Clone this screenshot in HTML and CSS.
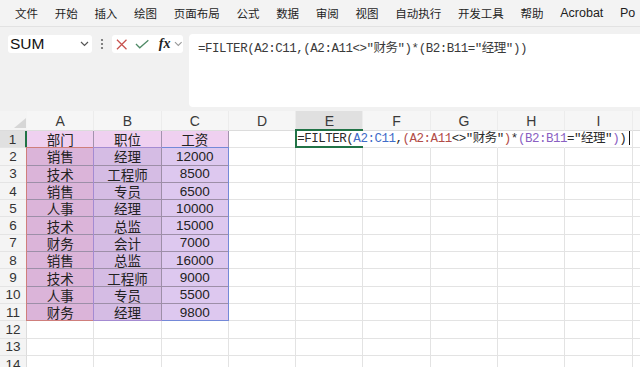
FILE: index.html
```html
<!DOCTYPE html>
<html lang="zh-CN">
<head>
<meta charset="utf-8">
<title>Excel FILTER</title>
<link rel="stylesheet" href="styles.css">
</head>
<body>
<div class="menubar">
  <span>文件</span><span>开始</span><span>插入</span><span>绘图</span><span>页面布局</span><span>公式</span><span>数据</span><span>审阅</span><span>视图</span><span>自动执行</span><span>开发工具</span><span>帮助</span><span>Acrobat</span><span>Po</span>
</div>
<div class="fbar">
  <div class="namebox"><span>SUM</span>
    <svg class="chev" width="9" height="6" viewBox="0 0 9 6"><path d="M1 1 L4.5 4.5 L8 1" fill="none" stroke="#555" stroke-width="1.2"/></svg>
  </div>
  <div class="dots"><svg width="4" height="12" viewBox="0 0 4 12"><circle cx="2" cy="2" r="1.1" fill="#666"/><circle cx="2" cy="6" r="1.1" fill="#666"/><circle cx="2" cy="10" r="1.1" fill="#666"/></svg></div>
  <div class="btns">
    <svg width="12" height="11" viewBox="0 0 12 11"><path d="M1 0.5 L11 10.5 M11 0.5 L1 10.5" stroke="#c8524e" stroke-width="1.3" fill="none"/></svg>
    <svg width="15" height="10" viewBox="0 0 15 10"><path d="M1 5 L5 9 L14 1" stroke="#4f8a66" stroke-width="1.3" fill="none"/></svg>
    <span class="fx">fx</span>
    <svg width="9" height="6" viewBox="0 0 9 6"><path d="M1 1 L4.5 4.5 L8 1" fill="none" stroke="#999" stroke-width="1.1"/></svg>
  </div>
  <div class="formula">=FILTER(A2:C11,(A2:A11&lt;&gt;"财务")*(B2:B11="经理"))</div>
</div>
<div class="sheet">
  <div class="corner"><svg width="12" height="10" viewBox="0 0 12 10"><polygon points="12,0 12,10 0,10" fill="#d6d6d6"/></svg></div>
  <div class="ch">A</div><div class="ch">B</div><div class="ch">C</div><div class="ch">D</div><div class="ch act">E</div><div class="ch">F</div><div class="ch">G</div><div class="ch">H</div><div class="ch">I</div><div class="ch">J</div>

  <div class="rh act">1</div>
  <div class="c th">部门</div><div class="c th">职位</div><div class="c th">工资</div><div class="c"></div>
  <div class="c nb edit"><span class="ftext">=FILTER(<span class="rb">A2:C11</span>,<span class="rr">(A2:A11</span>&lt;&gt;"财务"<span class="rr">)</span>*<span class="rp">(B2:B11</span>="经理"<span class="rp">)</span>)<span class="caret"></span></span></div>
  <div class="c nb"></div><div class="c nb"></div><div class="c nb"></div><div class="c"></div><div class="c"></div>

  <div class="rh">2</div><div class="c da">销售</div><div class="c db">经理</div><div class="c dc">12000</div><div class="c"></div><div class="c"></div><div class="c"></div><div class="c"></div><div class="c"></div><div class="c"></div><div class="c"></div>
  <div class="rh">3</div><div class="c da">技术</div><div class="c db">工程师</div><div class="c dc">8500</div><div class="c"></div><div class="c"></div><div class="c"></div><div class="c"></div><div class="c"></div><div class="c"></div><div class="c"></div>
  <div class="rh">4</div><div class="c da">销售</div><div class="c db">专员</div><div class="c dc">6500</div><div class="c"></div><div class="c"></div><div class="c"></div><div class="c"></div><div class="c"></div><div class="c"></div><div class="c"></div>
  <div class="rh">5</div><div class="c da">人事</div><div class="c db">经理</div><div class="c dc">10000</div><div class="c"></div><div class="c"></div><div class="c"></div><div class="c"></div><div class="c"></div><div class="c"></div><div class="c"></div>
  <div class="rh">6</div><div class="c da">技术</div><div class="c db">总监</div><div class="c dc">15000</div><div class="c"></div><div class="c"></div><div class="c"></div><div class="c"></div><div class="c"></div><div class="c"></div><div class="c"></div>
  <div class="rh">7</div><div class="c da">财务</div><div class="c db">会计</div><div class="c dc">7000</div><div class="c"></div><div class="c"></div><div class="c"></div><div class="c"></div><div class="c"></div><div class="c"></div><div class="c"></div>
  <div class="rh">8</div><div class="c da">销售</div><div class="c db">总监</div><div class="c dc">16000</div><div class="c"></div><div class="c"></div><div class="c"></div><div class="c"></div><div class="c"></div><div class="c"></div><div class="c"></div>
  <div class="rh">9</div><div class="c da">技术</div><div class="c db">工程师</div><div class="c dc">9000</div><div class="c"></div><div class="c"></div><div class="c"></div><div class="c"></div><div class="c"></div><div class="c"></div><div class="c"></div>
  <div class="rh">10</div><div class="c da">人事</div><div class="c db">专员</div><div class="c dc">5500</div><div class="c"></div><div class="c"></div><div class="c"></div><div class="c"></div><div class="c"></div><div class="c"></div><div class="c"></div>
  <div class="rh">11</div><div class="c da">财务</div><div class="c db">经理</div><div class="c dc">9800</div><div class="c"></div><div class="c"></div><div class="c"></div><div class="c"></div><div class="c"></div><div class="c"></div><div class="c"></div>
  <div class="rh">12</div><div class="c"></div><div class="c"></div><div class="c"></div><div class="c"></div><div class="c"></div><div class="c"></div><div class="c"></div><div class="c"></div><div class="c"></div><div class="c"></div>
  <div class="rh">13</div><div class="c"></div><div class="c"></div><div class="c"></div><div class="c"></div><div class="c"></div><div class="c"></div><div class="c"></div><div class="c"></div><div class="c"></div><div class="c"></div>
  <div class="rh">14</div><div class="c"></div><div class="c"></div><div class="c"></div><div class="c"></div><div class="c"></div><div class="c"></div><div class="c"></div><div class="c"></div><div class="c"></div><div class="c"></div>

  <div class="hl hl-blue"></div>
  <div class="hl hl-red"></div>
  <div class="hl hl-purple"></div>
</div>
</body>
</html>
```

FILE: styles.css
```css
* { box-sizing: border-box; }
html, body { margin: 0; padding: 0; }
body {
  width: 640px;
  height: 367px;
  overflow: hidden;
  background: #f1f1f1;
  font-family: "Liberation Sans", "Noto Sans CJK SC", sans-serif;
  color: #222;
}

.menubar {
  height: 27px;
  display: flex;
  align-items: center;
  gap: 16.7px;
  padding-left: 15px;
  font-size: 11.5px;
  color: #1e1e1e;
  background: #f3f3f3;
  border-bottom: 1px solid #e2e2e2;
  white-space: nowrap;
  overflow: hidden;
}
.menubar span:nth-child(13) { font-size: 12.5px; }
.menubar span:nth-child(14) { font-size: 12.5px; }

.fbar {
  height: 84px;
  display: flex;
  align-items: flex-start;
  padding-top: 7px;
  padding-left: 8px;
}
.namebox {
  width: 84px;
  height: 18px;
  margin-top: 1px;
  background: #fff;
  border-radius: 3px;
  display: flex;
  align-items: center;
  justify-content: space-between;
  padding: 0 3px 0 2px;
  font-size: 15.5px;
  color: #111;
}
.dots {
  width: 20px;
  height: 18px;
  margin-top: 1px;
  display: flex;
  align-items: center;
  justify-content: center;
}
.btns {
  width: 71px;
  height: 18px;
  margin-top: 1px;
  background: #fff;
  border-radius: 3px;
  display: flex;
  align-items: center;
  gap: 8px;
  padding-left: 4px;
}
.btns svg:last-child { margin-left: -4px; }
.fx {
  font-family: "Liberation Serif", "DejaVu Serif", serif;
  font-style: italic;
  font-weight: bold;
  font-size: 14px;
  color: #222;
  margin-left: 1px;
}
.formula {
  flex: 1;
  height: 73px;
  margin-left: 6px;
  background: #fff;
  border-radius: 4px 0 0 4px;
  padding: 3px 0 0 9px;
  font-family: "Liberation Mono", "Noto Sans CJK SC", monospace;
  font-size: 12.5px;
  letter-spacing: -0.48px;
  color: #3a3a3a;
  white-space: nowrap;
}

.sheet {
  position: relative;
  display: grid;
  grid-template-columns: 27px repeat(10, 67.3px);
  grid-template-rows: 20px repeat(14, 17.3px);
  background: #fff;
}
.corner {
  background: #f4f4f4;
  border-bottom: 1px solid #dcdcdc;
  display: flex;
  align-items: flex-end;
  justify-content: flex-end;
  padding: 0 1px 2px 0;
}
.ch {
  background: #f6f6f6;
  border-bottom: 1px solid #dcdcdc;
  border-right: 1px solid #ececec;
  display: flex;
  align-items: center;
  justify-content: center;
  font-size: 14px;
  color: #3a3a3a;
  padding-top: 1px;
}
.ch.act {
  background: #e0e0e0;
  border-bottom: 2px solid #217346;
}
.rh {
  background: #f4f4f4;
  border-bottom: 1px solid #e4e4e4;
  border-right: 1px solid #dcdcdc;
  display: flex;
  align-items: center;
  justify-content: center;
  font-size: 13.5px;
  color: #333;
}
.rh.act {
  background: #e0e0e0;
  border-right: 2px solid #217346;
}
.c {
  border-right: 1px solid #e3e3e3;
  border-bottom: 1px solid #e3e3e3;
  display: flex;
  align-items: center;
  justify-content: center;
  font-size: 13.5px;
  color: #222;
  white-space: nowrap;
}
.c.nb { border-right-color: transparent; }
.th { background: #efd0f0; border-color: #a393ae; }
.da { background: #dbb4d9; border-color: #9d8fa8; }
.db { background: #d5bce4; border-color: #9d8fa8; }
.dc { background: #ddc8ef; border-color: #9d8fa8; }

.edit {
  position: relative;
  justify-content: flex-start;
  padding-left: 1px;
  z-index: 2;
}
.ftext {
  font-family: "Liberation Mono", "Noto Sans CJK SC", monospace;
  font-size: 12.5px;
  letter-spacing: -0.48px;
  color: #2a2a2a;
  line-height: 15px;
}
.edit::after {
  content: "";
  position: absolute;
  left: -1px;
  top: -2px;
  right: -1px;
  bottom: -1px;
  border: 2px solid #217346;
  border-right: none;
}
.rb { color: #3f6cc8; }
.rr { color: #b24c47; }
.rp { color: #8a5fc2; }
.caret {
  display: inline-block;
  width: 1px;
  height: 14px;
  background: #111;
  margin-left: 3px;
  vertical-align: -3px;
}

.hl {
  position: absolute;
  grid-row: 3 / 13;
  top: -1px;
  left: -1px;
  right: 0;
  bottom: 0;
  pointer-events: none;
}
.hl-blue { grid-column: 2 / 5; border: 1px solid #7489d8; }
.hl-red { grid-column: 2 / 3; border: 1px solid #cf7f7c; border-right: none; }
.hl-purple { grid-column: 3 / 4; border: 1px solid #a48bd2; border-right: none; }
```
